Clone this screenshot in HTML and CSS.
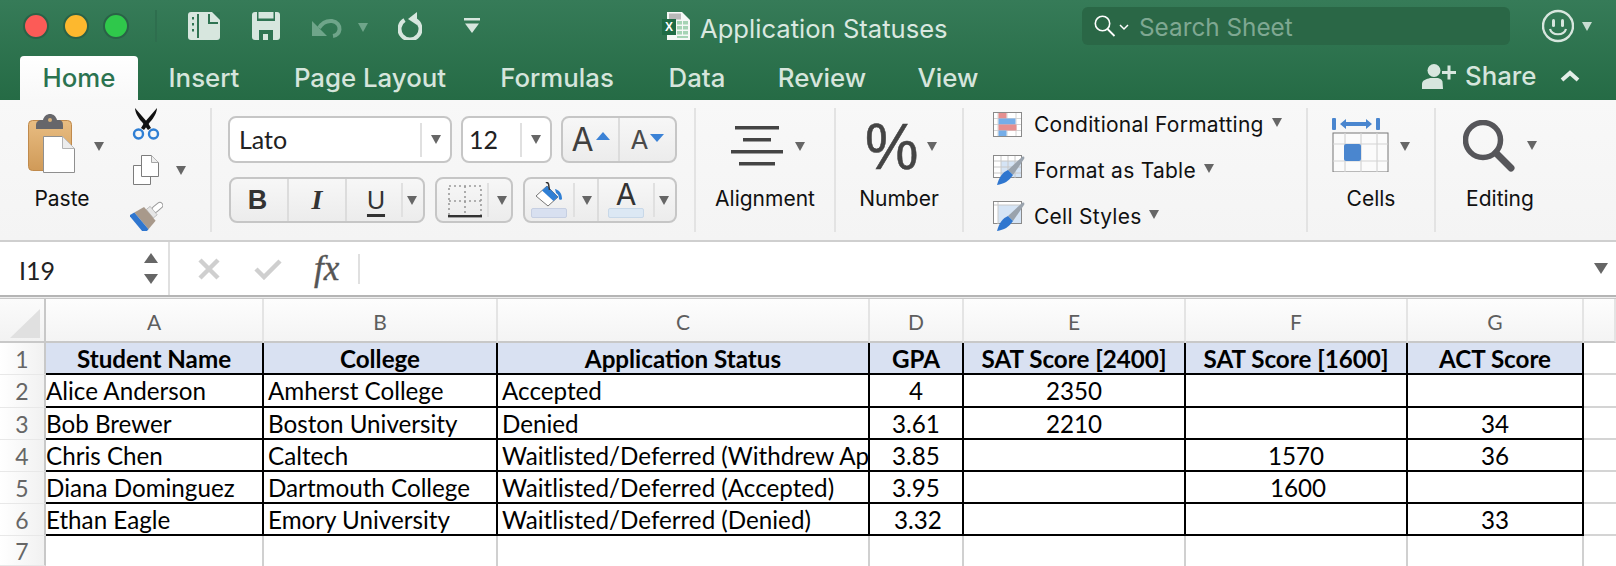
FILE: index.html
```html
<!DOCTYPE html>
<html lang="en">
<head>
<meta charset="utf-8">
<title>Application Statuses</title>
<link rel="stylesheet" href="styles.css">
</head>
<body>
<header class="titlebar">
  <div class="topbar">
    <div class="lights"><span class="light red"></span><span class="light yellow"></span><span class="light green"></span></div>
    <span class="top-sep"></span>
    <svg class="ti-sidebar" width="32" height="30" viewBox="0 0 32 30"><rect y="1" width="32" height="28" rx="3" fill="#d7e6de"/><rect x="9" y="3" width="2" height="24" fill="#2f7352"/><path d="M24 1h8v8z" fill="#2f7352"/><path d="M21 3v9h9" fill="none" stroke="#2f7352" stroke-width="2"/><rect x="4" y="6" width="2" height="2.500" fill="#2f7352"/><rect x="4" y="12" width="2" height="2.500" fill="#2f7352"/><rect x="4" y="18" width="2" height="2.500" fill="#2f7352"/></svg>
    <svg class="ti-save" width="28" height="30" viewBox="0 0 28 30"><rect y="1" width="28" height="28" rx="3" fill="#d7e6de"/><rect x="5" y="1" width="18" height="9" fill="#2f7352"/><rect x="6.500" y="1" width="15" height="6.500" fill="#d7e6de"/><rect x="7" y="19" width="14" height="10" fill="#2f7352"/><rect x="11" y="23" width="5" height="6" fill="#d7e6de"/></svg>
    <svg class="ti-undo" width="30" height="20" viewBox="0 0 30 20"><path d="M0 3v15h15z" fill="#6fa58a"/><path d="M7 10C10 5 15 2.500 20 3c5 .5 8 4.500 7.500 8.500-.5 3.500-3 6-6.500 6.500" fill="none" stroke="#6fa58a" stroke-width="4"/></svg>
    <span class="caret caret-dim ti-undo-caret"></span>
    <svg class="ti-redo" width="24" height="28" viewBox="0 0 24 28"><path d="M6.500 8a10.500 10.500 0 1 0 11 0" fill="none" stroke="#d7e6de" stroke-width="4"/><path d="M19 0v13L10 7z" fill="#d7e6de"/></svg>
    <svg class="ti-custom" width="16" height="16" viewBox="0 0 16 16"><rect width="16" height="2.500" fill="#d7e6de"/><path d="M1 5.500h14L8 15z" fill="#d7e6de"/></svg>
    <svg class="ti-xl" width="28" height="28" viewBox="0 0 28 28"><path d="M5 0h15l8 8v20H5z" fill="#f5f8f6"/><path d="M7 1.500h12v6H7z" fill="#b9b9b9"/><g fill="#a5d3b4"><rect x="15" y="9" width="5" height="3.500"/><rect x="21" y="9" width="5" height="3.500"/><rect x="15" y="14" width="5" height="3.500"/><rect x="21" y="14" width="5" height="3.500"/><rect x="15" y="19" width="5" height="3.500"/><rect x="21" y="19" width="5" height="3.500"/><rect x="15" y="24" width="11" height="2"/></g><rect y="7" width="14" height="16" fill="#1e6b44"/><text x="7" y="19" class="xl-x">X</text></svg>
    <span class="doc-title">Application Statuses</span>
    <div class="search">
      <svg width="22" height="22" viewBox="0 0 22 22"><circle cx="8.500" cy="8.500" r="7.200" fill="none" stroke="#fff" stroke-width="1.600"/><path d="M13.500 14l7 7" stroke="#fff" stroke-width="1.800"/></svg>
      <svg class="search-chev" width="10" height="7" viewBox="0 0 10 7"><path d="M1 1l4 4 4-4" fill="none" stroke="#fff" stroke-width="1.500"/></svg>
      <span class="search-text">Search Sheet</span>
    </div>
    <svg class="ti-smile" width="32" height="34" viewBox="0 0 32 34"><circle cx="16" cy="17" r="15" fill="none" stroke="#d7e6de" stroke-width="2.400"/><rect x="10" y="10" width="3" height="8" rx="1.500" fill="#d7e6de"/><rect x="19" y="10" width="3" height="8" rx="1.500" fill="#d7e6de"/><path d="M8 20c2 7 14 7 16 0" fill="none" stroke="#d7e6de" stroke-width="2.200"/></svg>
    <span class="caret caret-light ti-smile-caret"></span>
  </div>
  <nav class="tabs">
    <span class="tab tab-home">Home</span>
    <span class="tab tab-insert">Insert</span>
    <span class="tab tab-layout">Page Layout</span>
    <span class="tab tab-formulas">Formulas</span>
    <span class="tab tab-data">Data</span>
    <span class="tab tab-review">Review</span>
    <span class="tab tab-view">View</span>
    <div class="share">
      <svg width="34" height="25" viewBox="0 0 34 25"><circle cx="12" cy="6.500" r="6.500" fill="#d7e6de"/><path d="M0 25v-5c0-4 5-5 8-6h8c3 1 4 2 4.500 3.500l.5 7.500z" fill="#d7e6de"/><path d="M20 8.500h14M27 1.500v14" stroke="#d7e6de" stroke-width="3"/></svg>
      <span class="share-text">Share</span>
      <svg class="share-chev" width="20" height="12" viewBox="0 0 20 12"><path d="M2 10l8-7 8 7" fill="none" stroke="#e3eee8" stroke-width="4"/></svg>
    </div>
  </nav>
</header>

<section class="ribbon">
  <div class="group g-clip">
    <div class="paste">
      <div class="paste-row">
        <svg width="47" height="59" viewBox="0 0 47 59"><defs><linearGradient id="board" x1="0" y1="0" x2="0" y2="1"><stop offset="0" stop-color="#e8bd82"/><stop offset="1" stop-color="#d09a58"/></linearGradient></defs><rect x=".5" y="6.500" width="43" height="50" rx="4" fill="url(#board)" stroke="#c08a4c"/><path d="M8 15v-4c0-3 2-5 6-5h1c1-4 4-6 7-6s6 2 7 6h1c4 0 5 2 5 5v4z" fill="#66666a"/><circle cx="22" cy="6" r="2" fill="#d9b27a"/><path d="M15.500 22.500h19l12 12v24h-31z" fill="#fff" stroke="#8f8f8f"/><path d="M34.500 22.500v12h12" fill="#ececec" stroke="#b3b3b3"/></svg>
        <span class="caret caret-paste"></span>
      </div>
      <span class="label label-paste">Paste</span>
    </div>
    <div class="tools">
      <svg class="tool-cut" width="28" height="32" viewBox="0 0 28 32"><path d="M3 0l13 15 3 5-3 2-6-8C6 10 3 4 3 0z" fill="#111"/><path d="M25 0L12 15l-3 5 3 2 6-8c4-4 7-10 7-14z" fill="#111"/><circle cx="6.500" cy="26" r="4.500" fill="none" stroke="#2f7fd4" stroke-width="2.400"/><circle cx="21.500" cy="26" r="4.500" fill="none" stroke="#2f7fd4" stroke-width="2.400"/></svg>
      <div class="tool-copy">
        <svg width="26" height="30" viewBox="0 0 26 30"><path d="M.5 10.500h17v19H.5z" fill="#fff" stroke="#7c7c7c"/><path d="M8.500.5h10l7 7v14h-17z" fill="#fff" stroke="#7c7c7c"/><path d="M18.500.5v7h7" fill="#eee" stroke="#a5a5a5"/></svg>
        <span class="caret caret-copy"></span>
      </div>
      <svg class="tool-brush" width="33" height="30" viewBox="0 0 33 30"><g transform="translate(16 16) rotate(50)"><rect x="-3" y="-21" width="6" height="12" rx="3" fill="#fff" stroke="#9a9a9a"/><rect x="-5.500" y="-10" width="11" height="5" fill="#e6e6e6" stroke="#a5a5a5" stroke-width=".6"/><path d="M-9-5H9l2 11h-22z" fill="#a8998b"/><path d="M-11 6h22l1 6h-24z" fill="#2f76cf"/></g></svg>
    </div>
  </div>

  <div class="group g-font">
    <div class="font-row font-row-one">
      <div class="box box-name"><span class="box-text">Lato</span><span class="vsep"></span><span class="caret caret-box"></span></div>
      <div class="box box-size"><span class="box-text">12</span><span class="vsep"></span><span class="caret caret-box"></span></div>
      <div class="box box-btn box-grow">
        <div class="grow-cell grow-up"><span class="glyph-a-big">A</span><span class="tri-up"></span></div>
        <div class="grow-cell grow-down"><span class="glyph-a-small">A</span><span class="tri-down"></span></div>
      </div>
    </div>
    <div class="font-row font-row-two">
      <div class="box box-btn box-biu">
        <span class="biu biu-b">B</span>
        <span class="biu biu-i">I</span>
        <span class="biu biu-u">U</span>
        <span class="vsep vsep-u"></span><span class="caret caret-box"></span>
      </div>
      <div class="box box-btn box-border">
        <svg class="border-icon" width="34" height="36" viewBox="0 0 34 36"><path d="M1 3h32v30H1zM17 3v30M1 18h32" fill="none" stroke="#9a9a9a" stroke-width="1.600" stroke-dasharray="2 3"/><rect y="32" width="34" height="2.400" fill="#333"/></svg>
        <span class="vsep"></span><span class="caret caret-box"></span>
      </div>
      <div class="box box-btn box-color">
        <div class="color-cell color-fill">
          <svg width="28" height="25" viewBox="0 0 28 25"><path d="M1 14L12 4l11 11-10 9z" fill="#fff" stroke="#777"/><path d="M7 8.500L12 4l11 11-4.500 4z" fill="#2f7fd4"/><path d="M20 7c4 1 7 4 7 10 0 1-3 1-3 0 0-3-1-5-3-6z" fill="#2f7fd4"/><path d="M11 1c1-1 2 0 2.500 1l1 6" fill="none" stroke="#333" stroke-width="1.500"/></svg>
          <span class="swatch swatch-fill"></span>
        </div>
        <span class="vsep"></span><span class="caret caret-color-one"></span>
        <div class="color-cell color-text">
          <span class="glyph-a-color">A</span>
          <span class="swatch swatch-text"></span>
        </div>
        <span class="vsep"></span><span class="caret caret-color-two"></span>
      </div>
    </div>
  </div>

  <div class="group g-big g-align">
    <div class="big-row big-row-align">
      <svg width="52" height="40" viewBox="0 0 52 40"><g fill="#444"><rect x="4" width="44" height="3.500"/><rect x="12" y="12" width="28" height="3.500"/><rect y="24" width="52" height="3.500"/><rect x="8" y="36" width="36" height="3.500"/></g></svg>
      <span class="caret caret-big"></span>
    </div>
    <span class="label">Alignment</span>
  </div>

  <div class="group g-big g-number">
    <div class="big-row big-row-number">
      <span class="percent">%</span>
      <span class="caret caret-big"></span>
    </div>
    <span class="label">Number</span>
  </div>

  <div class="group g-styles">
    <div class="style-row">
      <svg width="33" height="30" viewBox="0 0 33 30"><rect x=".5" y="3.500" width="28" height="24" fill="#fff" stroke="#8a8a8a"/><path d="M5 4v23M14 4v23M23 4v23M1 9.500h27M1 15.500h27M1 21.500h27" stroke="#d4d4d4"/><rect x="5.500" y="4" width="8" height="5.500" fill="#e58f8f"/><rect x="5.500" y="9.500" width="17" height="6" fill="#74ade8"/><rect x="5.500" y="15.500" width="18" height="6" fill="#e58f8f"/><rect x="5.500" y="21.500" width="8" height="5.500" fill="#74ade8"/></svg>
      <span class="style-text">Conditional Formatting</span><span class="caret caret-style"></span>
    </div>
    <div class="style-row">
      <svg width="33" height="30" viewBox="0 0 33 30"><rect x=".5" y=".5" width="28" height="22" fill="#fff" stroke="#8a8a8a"/><rect x="8" y="6" width="20" height="16" fill="#d5e4f5"/><path d="M8 1v22M15 1v22M22 1v22M1 6h27M1 12h27M1 18h27" stroke="#c8c8c8"/><path d="M15 15L29 2c2-1 3 0 2 2L20 20z" fill="#9aa3ad"/><path d="M4 30c2-8 6-13 11-15l5 5c-4 6-9 9-16 10z" fill="#2f76cf"/></svg>
      <span class="style-text">Format as Table</span><span class="caret caret-style"></span>
    </div>
    <div class="style-row">
      <svg width="33" height="30" viewBox="0 0 33 30"><rect x=".5" y=".5" width="28" height="22" fill="#fff" stroke="#8a8a8a"/><rect x="5" y="4" width="23" height="18" fill="#d5e4f5"/><path d="M1 4h27M5 1v22" stroke="#c8c8c8"/><path d="M15 15L29 2c2-1 3 0 2 2L20 20z" fill="#9aa3ad"/><path d="M4 30c2-8 6-13 11-15l5 5c-4 6-9 9-16 10z" fill="#2f76cf"/></svg>
      <span class="style-text">Cell Styles</span><span class="caret caret-style"></span>
    </div>
  </div>

  <div class="group g-big g-cells">
    <div class="big-row big-row-cells">
      <svg width="57" height="54" viewBox="0 0 57 54"><rect x="0" y="0" width="4" height="12" rx="1" fill="#4a86cf"/><rect x="44" y="0" width="4" height="12" rx="1" fill="#4a86cf"/><path d="M8 6l6-5v3h20V1l6 5-6 5V8H14v3z" fill="#4a86cf"/><rect x="1" y="15" width="55" height="39" fill="#fbfbfb" stroke="#777"/><path d="M13 15v39M29 15v39M45 15v39M1 26h55M1 43h55" stroke="#d4d4d4" stroke-width="1.200"/><rect x="12" y="26" width="17" height="17" rx="2" fill="#4a86cf"/></svg>
      <span class="caret caret-cells"></span>
    </div>
    <span class="label">Cells</span>
  </div>

  <div class="group g-big g-last">
    <div class="big-row big-row-edit">
      <svg width="52" height="52" viewBox="0 0 52 52"><circle cx="20" cy="20" r="17.500" fill="none" stroke="#56565a" stroke-width="5.500"/><path d="M33 33l15 15" stroke="#56565a" stroke-width="7" stroke-linecap="round"/></svg>
      <span class="caret caret-big"></span>
    </div>
    <span class="label">Editing</span>
  </div>
</section>

<section class="formula">
  <div class="namebox">
    <span class="name-text">I19</span>
    <div class="spin"><span class="spin-up"></span><span class="spin-down"></span></div>
  </div>
  <svg class="f-x" width="22" height="22" viewBox="0 0 22 22"><path d="M2 2l18 18M20 2L2 20" stroke="#cfcfcf" stroke-width="4.500"/></svg>
  <svg class="f-check" width="28" height="22" viewBox="0 0 28 22"><path d="M2 11l8 8L26 3" fill="none" stroke="#cfcfcf" stroke-width="4.500"/></svg>
  <span class="f-fx">fx</span>
  <span class="f-sep"></span>
  <span class="f-caret"></span>
</section>
<div class="doubleline"></div>

<main class="sheet">
  <div class="corner"><span class="corner-tri"></span></div>
  <div class="col">A</div><div class="col">B</div><div class="col">C</div><div class="col">D</div><div class="col">E</div><div class="col">F</div><div class="col">G</div><div class="col"></div>

  <div class="rowh">1</div>
  <div class="cell head">Student Name</div><div class="cell head">College</div><div class="cell head">Application Status</div><div class="cell head">GPA</div><div class="cell head">SAT Score [2400]</div><div class="cell head">SAT Score [1600]</div><div class="cell head">ACT Score</div><div class="rest"></div>

  <div class="rowh">2</div>
  <div class="cell first">Alice Anderson</div><div class="cell">Amherst College</div><div class="cell">Accepted</div><div class="cell num">4</div><div class="cell num">2350</div><div class="cell num"></div><div class="cell num"></div><div class="rest"></div>

  <div class="rowh">3</div>
  <div class="cell first">Bob Brewer</div><div class="cell">Boston University</div><div class="cell">Denied</div><div class="cell num">3.61</div><div class="cell num">2210</div><div class="cell num"></div><div class="cell num">34</div><div class="rest"></div>

  <div class="rowh">4</div>
  <div class="cell first">Chris Chen</div><div class="cell">Caltech</div><div class="cell">Waitlisted/Deferred (Withdrew Ap</div><div class="cell num">3.85</div><div class="cell num"></div><div class="cell num">1570</div><div class="cell num">36</div><div class="rest"></div>

  <div class="rowh">5</div>
  <div class="cell first">Diana Dominguez</div><div class="cell">Dartmouth College</div><div class="cell">Waitlisted/Deferred (Accepted)</div><div class="cell num">3.95</div><div class="cell num"></div><div class="cell num nudge">1600</div><div class="cell num"></div><div class="rest"></div>

  <div class="rowh">6</div>
  <div class="cell first">Ethan Eagle</div><div class="cell">Emory University</div><div class="cell">Waitlisted/Deferred (Denied)</div><div class="cell num nudge">3.32</div><div class="cell num"></div><div class="cell num"></div><div class="cell num">33</div><div class="rest"></div>

  <div class="rowh">7</div>
  <div class="blank"></div><div class="blank"></div><div class="blank"></div><div class="blank"></div><div class="blank"></div><div class="blank"></div><div class="blank"></div><div class="rest rest-last"></div>
</main>
</body>
</html>
```
FILE: styles.css
```css
* { box-sizing: border-box; }
html, body { margin: 0; padding: 0; }
body {
  width: 1616px;
  height: 566px;
  overflow: hidden;
  background: #fff;
  font-family: Inter, "Liberation Sans", sans-serif;
  color: #111;
}
svg { display: block; flex: none; }

/* title bar */
.titlebar {
  height: 100px;
  background: linear-gradient(#367b58, #256b45);
}
.topbar {
  height: 56px;
  padding: 0 24px 4px 23px;
  display: flex;
  align-items: center;
}
.lights { display: flex; gap: 14px; }
.light { width: 26px; height: 26px; border-radius: 50%; border: 2.500px solid #2a6247; }
.red { background: #fc5b57; }
.yellow { background: #fdb82e; }
.green { background: #2fc84b; }
.top-sep { width: 2px; height: 32px; margin-left: 26px; background: #2e6e4e; }
.ti-sidebar { margin-left: 31px; }
.ti-save { margin-left: 32px; }
.ti-undo { margin-left: 32px; margin-top: 4px; }
.ti-undo-caret { margin-left: 16px; margin-top: 2px; }
.ti-redo { margin-left: 30px; }
.ti-custom { margin-left: 42px; }
.ti-xl { margin-left: 182px; }
.xl-x { font: 700 12px "Liberation Sans", sans-serif; fill: #fff; text-anchor: middle; }
.doc-title { margin-left: 10px; margin-top: 4px; font-size: 25.600px; color: #dae8e0; white-space: nowrap; }
.search {
  margin-left: auto;
  width: 428px;
  height: 38px;
  padding-left: 12px;
  display: flex;
  align-items: center;
  border-radius: 6px;
  background: #2a6746;
}
.search-chev { margin-left: 3px; margin-top: 2px; }
.search-text { margin-left: 10px; margin-top: 1px; font-size: 24.300px; color: #7fa892; }
.ti-smile { margin-left: 32px; }
.ti-smile-caret { margin-left: 8px; }
.caret {
  flex: none;
  width: 0;
  height: 0;
  border-left: 5px solid transparent;
  border-right: 5px solid transparent;
  border-top: 9px solid #666;
}
.caret-dim { border-top-color: #6fa58a; }
.caret-light { border-top-color: #c9ddd2; }

/* tabs */
.tabs { height: 44px; display: flex; }
.tab {
  flex: none;
  height: 44px;
  line-height: 44px;
  text-align: center;
  font-size: 25.800px;
  font-weight: 500;
  color: #d6e5dc;
}
.tab-home {
  margin-left: 20px;
  width: 118px;
  border-radius: 4px 4px 0 0;
  background: linear-gradient(#fff, #f8f8f8);
  color: #2b7350;
}
.tab-insert { width: 132px; }
.tab-layout { width: 200px; }
.tab-formulas { width: 174px; }
.tab-data { width: 106px; }
.tab-review { width: 144px; }
.tab-view { width: 108px; }
.share { margin-left: 420px; height: 44px; display: flex; align-items: center; }
.share svg { margin-top: -4px; }
.share-text { margin-left: 9px; margin-top: -6px; font-size: 25.800px; font-weight: 500; color: #d6e5dc; }
.share .share-chev { margin-left: 24px; margin-top: -5px; }

/* ribbon */
.ribbon {
  height: 140px;
  padding-top: 8px;
  display: flex;
  background: linear-gradient(#f8f8f8, #f4f4f4);
}
.group { height: 124px; flex: none; border-right: 2px solid #e3e3e3; }
.label { font-size: 21px; line-height: 24px; color: #111; white-space: nowrap; }
.g-clip { width: 212px; display: flex; }
.paste { width: 102px; padding-left: 28px; padding-top: 6px; }
.paste-row { height: 73px; display: flex; align-items: flex-start; }
.caret-paste { margin-left: 19px; margin-top: 28px; }
.label-paste { display: block; width: 68px; text-align: center; }
.tools { padding-left: 30px; }
.tool-copy { margin-top: 15px; margin-left: 1px; display: flex; align-items: flex-start; }
.caret-copy { margin-left: 17px; margin-top: 11px; }
.tool-brush { margin-top: 16px; margin-left: -2px; }

.g-font { width: 484px; padding-left: 16px; }
.font-row { display: flex; }
.font-row-one { margin-top: 8px; height: 47px; }
.font-row-two { margin-top: 14px; height: 46px; }
.box {
  flex: none;
  display: flex;
  align-items: center;
  height: 100%;
  border: 2px solid #c6c6c6;
  border-radius: 8px;
  background: #fff;
}
.box-btn { background: linear-gradient(#f7f7f7, #ececec); }
.box-text { flex: 1; padding-left: 9px; padding-bottom: 2px; font-family: Lato, sans-serif; font-size: 25px; color: #222; }
.box-size .box-text { padding-left: 6px; }
.vsep { flex: none; width: 2px; height: 34px; background: #e0e0e0; }
.caret-box { margin-left: 9px; margin-right: 9px; }
.box-name { width: 224px; }
.box-size { width: 91px; margin-left: 9px; }
.box-grow { width: 116px; margin-left: 9px; }
.grow-cell { height: 100%; display: flex; align-items: center; justify-content: center; }
.grow-up { width: 57px; border-right: 2px solid #dcdcdc; }
.grow-down { flex: 1; }
.glyph-a-big { font-size: 32px; color: #3f3f3f; line-height: 1; }
.glyph-a-small { font-size: 26px; color: #4a4a4a; line-height: 1; }
.tri-up { margin-left: 2px; margin-bottom: 8px; border-left: 7px solid transparent; border-right: 7px solid transparent; border-bottom: 8px solid #3b82d6; }
.tri-down { margin-left: 2px; margin-bottom: 4px; border-left: 7px solid transparent; border-right: 7px solid transparent; border-top: 8px solid #3b82d6; }
.box-biu { width: 196px; margin-left: 1px; }
.biu { flex: none; width: 58px; height: 100%; display: flex; align-items: center; justify-content: center; border-right: 2px solid #dcdcdc; color: #333; }
.biu-b { font: 700 27px "Liberation Sans", sans-serif; padding-right: 3px; }
.biu-i { font: italic 700 28px "Liberation Serif", serif; }
.biu-u { font: 400 25px "Liberation Sans", sans-serif; border-right: 0; text-decoration: underline; text-underline-offset: 5px; text-decoration-thickness: 2.500px; }
.box-biu .caret-box { margin-left: 4px; margin-right: 0; }
.vsep-u { margin-left: -4px; }
.box-border { width: 78px; margin-left: 10px; padding-left: 11px; }
.border-icon { margin-right: 5px; margin-top: 2px; }
.box-border .caret-box { margin-left: 8px; margin-right: 0; }
.box-color { width: 154px; margin-left: 10px; }
.color-cell { flex: none; height: 100%; display: flex; flex-direction: column; align-items: center; justify-content: flex-end; padding-bottom: 3px; }
.color-fill { width: 48px; }
.color-text { width: 56px; border-left: 2px solid #dcdcdc; }
.swatch { display: block; width: 36px; height: 10px; border-radius: 2px; margin-top: 1px; }
.swatch-fill { background: #d8e0f0; border: 1px solid #c6cfe2; }
.swatch-text { background: #dce8f4; border: 1px solid #c8d8e8; }
.glyph-a-color { font-size: 30px; line-height: 26px; color: #333; }
.caret-color-one { margin-left: 7px; margin-right: 5px; }
.caret-color-two { margin-left: 4px; }

.g-big { width: 128px; display: flex; flex-direction: column; align-items: center; }
.g-align { width: 140px; }
.big-row { height: 79px; display: flex; align-items: flex-start; padding-top: 18px; }
.big-row-align { margin-left: 5px; }
.big-row-number { margin-left: 4px; }
.caret-big { margin-left: 12px; margin-top: 16px; }
.percent { display: block; width: 50px; height: 50px; font: 400 60px/50px "Liberation Sans", sans-serif; color: #444; text-align: center; margin-top: -4px; transform: scaleY(1.08); -webkit-text-stroke: .5px #444; }
.g-styles { width: 344px; padding-left: 29px; display: flex; flex-direction: column; gap: 14px; }
.style-row { height: 32px; display: flex; align-items: center; }
.style-text { margin-left: 8px; margin-top: 1px; font-size: 21px; letter-spacing: .25px; white-space: nowrap; }
.caret-style { margin-left: 8px; margin-top: -3px; }
.big-row-cells { padding-top: 10px; }
.caret-cells { margin-left: 11px; margin-top: 24px; }
.big-row-edit { padding-top: 12px; }
.big-row-edit .caret-big { margin-top: 21px; }
.g-last { border-right: 0; }

/* formula bar */
.formula {
  height: 55px;
  border-top: 2px solid #cfcfcf;
  display: flex;
  align-items: center;
  background: #fff;
}
.namebox {
  width: 170px;
  height: 100%;
  padding-left: 19px;
  display: flex;
  align-items: center;
  border-right: 2px solid #e0e0e0;
}
.name-text { width: 125px; padding-top: 2px; font-family: Lato, sans-serif; font-size: 25px; color: #222; }
.spin { display: flex; flex-direction: column; gap: 11px; }
.spin-up { border-left: 7px solid transparent; border-right: 7px solid transparent; border-bottom: 10px solid #666; }
.spin-down { border-left: 7px solid transparent; border-right: 7px solid transparent; border-top: 10px solid #666; }
.f-x { margin-left: 28px; }
.f-check { margin-left: 34px; }
.f-fx { margin-left: 32px; width: 30px; font: italic 400 35px/1 "Liberation Serif", serif; color: #555; -webkit-text-stroke: .4px #555; }
.f-sep { margin-left: 14px; width: 2px; height: 30px; background: #e0e0e0; }
.f-caret { margin-left: auto; margin-right: 8px; border-left: 7px solid transparent; border-right: 7px solid transparent; border-top: 11px solid #666; }
.doubleline { height: 4px; border-top: 2px solid #b5b5b5; border-bottom: 1px solid #c8c8c8; background: #eee; }

/* sheet */
.sheet {
  display: grid;
  grid-template-columns: 46px 218px 234px 372px 94px 222px 222px 176px 32px;
  grid-template-rows: 44px 32px 33px 32px 32px 32px 32px 30px;
  font-family: Lato, sans-serif;
  font-size: 24.200px;
  color: #000;
}
.corner { background: linear-gradient(#fbfbfb, #f2f2f2); border-right: 2px solid #c8c8c8; border-bottom: 2px solid #c8c8c8; padding: 10px 0 0 10px; }
.corner-tri { display: block; width: 0; height: 0; border-left: 30px solid transparent; border-bottom: 29px solid #e0e0e0; }
.col {
  display: flex;
  align-items: center;
  justify-content: center;
  padding-top: 3px;
  background: linear-gradient(#fdfdfd, #f4f4f4);
  border-right: 2px solid #e4e4e4;
  border-bottom: 2px solid #c8c8c8;
  font-size: 21px;
  color: #5e5e5e;
}
.rowh {
  display: flex;
  align-items: center;
  justify-content: center;
  background: linear-gradient(90deg, #fff, #f1f1f1);
  border-right: 2px solid #c8c8c8;
  border-bottom: 1px solid #e8e8e8;
  font-size: 23px;
  color: #666;
}
.cell {
  display: flex;
  align-items: center;
  padding-left: 4px;
  overflow: hidden;
  white-space: nowrap;
  border-right: 2px solid #000;
  border-bottom: 2px solid #000;
}
.first { padding-left: 0; }
.head { justify-content: center; padding-left: 0; font-weight: 700; background: #d9e1f2; }
.num { justify-content: center; padding-left: 0; }
.nudge { padding-left: 4px; }
.rest { border-bottom: 2px solid #d4d4d4; }
.rest-last { border-bottom: 0; }
.blank { border-right: 2px solid #d0d0d0; }
```
